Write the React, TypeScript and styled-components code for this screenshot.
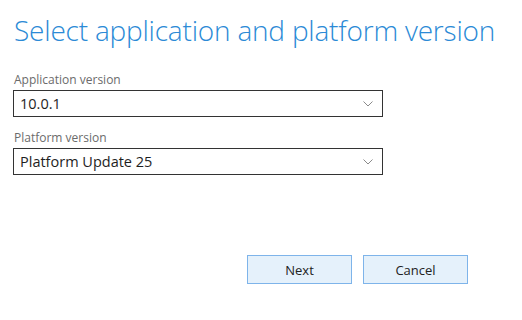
import React from "react";
import styled, { createGlobalStyle } from "styled-components";

const Global = createGlobalStyle`
  html, body { margin: 0; padding: 0; background: #ffffff; }
  body { font-family: "Open Sans", "Noto Sans", sans-serif; }
`;

const Page = styled.div`
  width: 522px;
  height: 320px;
  box-sizing: border-box;
  padding: 10px 54px 0 13px;
  display: flex;
  flex-direction: column;
`;

const Title = styled.h1`
  margin: 0 0 0 1px;
  font-family: "Open Sans", sans-serif;
  font-weight: 300;
  font-size: 28px;
  letter-spacing: -0.2px;
  line-height: 40px;
  color: #2b8ad6;
  white-space: nowrap;
`;

const Fields = styled.div`
  margin-top: 22px;
  display: flex;
  flex-direction: column;
  gap: 13px;
`;

const Field = styled.div`
  display: flex;
  flex-direction: column;
  gap: 3px;
`;

const Label = styled.label`
  margin-left: 1px;
  font-size: 12px;
  line-height: 15px;
  color: #6b6b6b;
`;

const SelectBox = styled.div`
  width: 370px;
  height: 27px;
  box-sizing: border-box;
  border: 1px solid #333333;
  display: flex;
  align-items: center;
  justify-content: space-between;
  padding: 0 9px 0 6px;
  font-size: 14.5px;
  color: #1e1e1e;
`;

const Chevron = () => (
  <svg width="10" height="6" viewBox="0 0 10 6">
    <path d="M0.5 0.5 L5 5 L9.5 0.5" fill="none" stroke="#8a8a8a" strokeWidth="1" />
  </svg>
);

const Footer = styled.div`
  margin-top: auto;
  margin-bottom: 36px;
  display: flex;
  justify-content: flex-end;
  gap: 11px;
`;

const Button = styled.button`
  width: 105px;
  height: 29px;
  box-sizing: border-box;
  background: #e5f1fb;
  border: 1px solid #7eb4ea;
  font-family: "Open Sans", sans-serif;
  font-size: 13px;
  color: #222222;
  padding: 0;
`;

export default function App() {
  return (
    <>
      <Global />
      <Page>
        <Title>Select application and platform version</Title>
        <Fields>
          <Field>
            <Label>Application version</Label>
            <SelectBox>
              <span>10.0.1</span>
              <Chevron />
            </SelectBox>
          </Field>
          <Field>
            <Label>Platform version</Label>
            <SelectBox>
              <span>Platform Update 25</span>
              <Chevron />
            </SelectBox>
          </Field>
        </Fields>
        <Footer>
          <Button>Next</Button>
          <Button>Cancel</Button>
        </Footer>
      </Page>
    </>
  );
}
